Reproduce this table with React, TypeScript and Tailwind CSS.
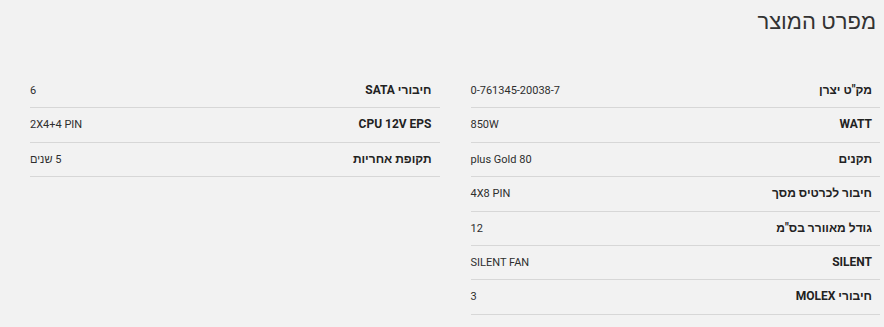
const rightSpecs = [
  { label: 'מק"ט יצרן', value: '0-761345-20038-7' },
  { label: 'WATT', value: '850W' },
  { label: 'תקנים', value: 'plus Gold 80' },
  { label: 'חיבור לכרטיס מסך', value: '4X8 PIN' },
  { label: 'גודל מאוורר בס"מ', value: '12' },
  { label: 'SILENT', value: 'SILENT FAN' },
  { label: 'חיבורי MOLEX', value: '3' },
];

const leftSpecs = [
  { label: 'חיבורי SATA', value: '6' },
  { label: 'CPU 12V EPS', value: '2X4+4 PIN' },
  { label: 'תקופת אחריות', value: '5 שנים' },
];

function SpecRow({ label, value }: { label: string; value: string }) {
  return (
    <div className="flex items-center justify-between border-b border-[#d7d7d7] py-[7px] pr-2 leading-[19.4px]">
      <span className="text-[12px] font-bold text-[#222]">{label}</span>
      <span className="text-[11px] text-[#2e2e2e]">{value}</span>
    </div>
  );
}

export default function App() {
  return (
    <div
      dir="rtl"
      className="w-[884px] h-[327px] bg-[#f2f2f2] pr-1 pl-[30px]"
      style={{ fontFamily: "Roboto, 'Liberation Sans', Arial, sans-serif" }}
    >
      <h2 className="pt-[7px] pr-1 text-[22px] leading-[30px] font-normal text-[#333]">מפרט המוצר</h2>

      <div className="mt-[37px] grid grid-cols-2 gap-[31px]">
        <div className="flex flex-col">
          {rightSpecs.map((s) => (
            <SpecRow key={s.label} label={s.label} value={s.value} />
          ))}
        </div>
        <div className="flex flex-col">
          {leftSpecs.map((s) => (
            <SpecRow key={s.label} label={s.label} value={s.value} />
          ))}
        </div>
      </div>
    </div>
  );
}
